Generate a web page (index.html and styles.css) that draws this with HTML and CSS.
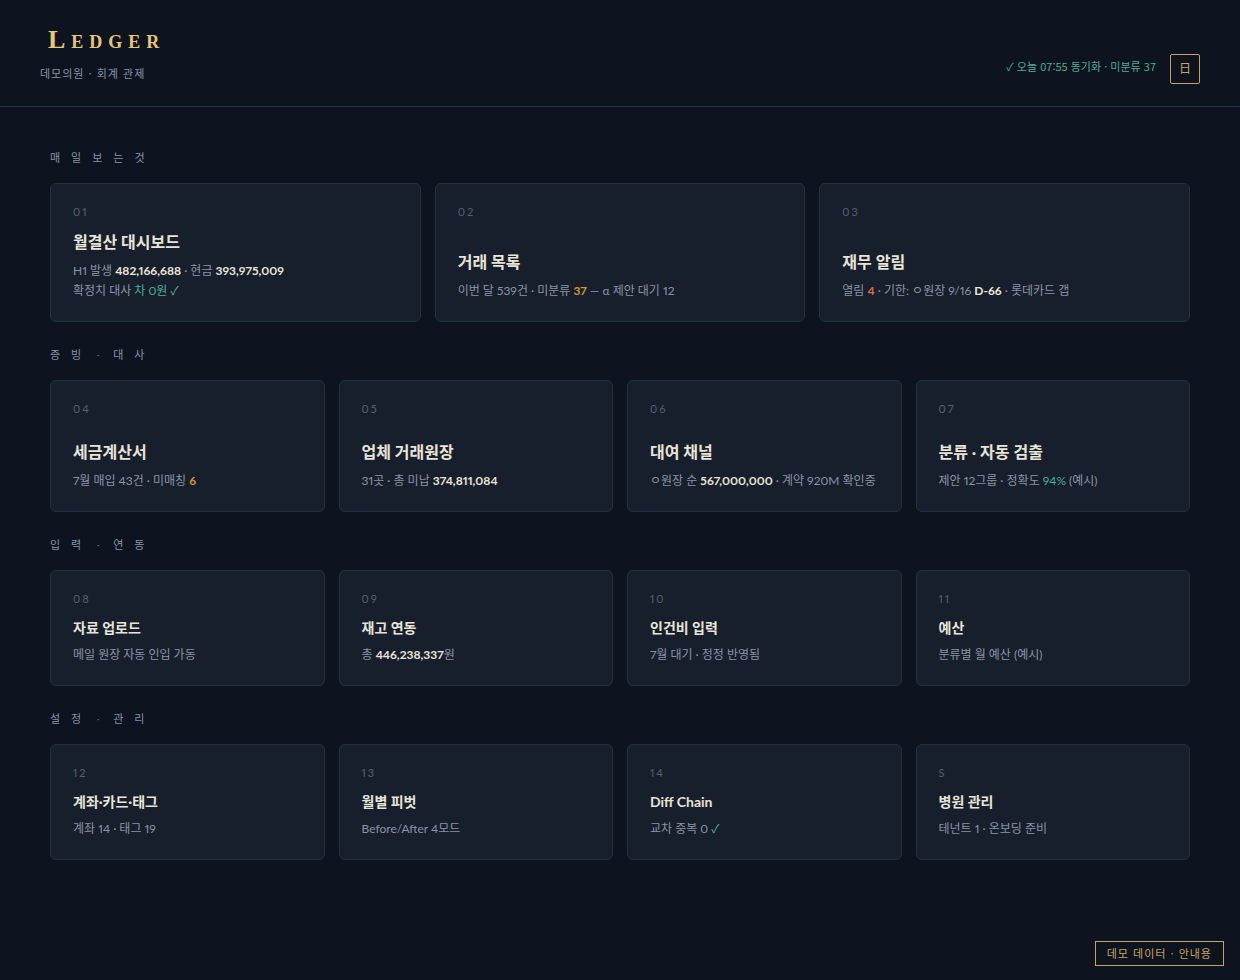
FILE: index.html
```html
<!DOCTYPE html>
<html lang="ko">
<head>
  <meta charset="UTF-8" />
  <meta name="viewport" content="width=device-width, initial-scale=1.0"/>
  <title>Ledger</title>
  <link rel="stylesheet" href="styles.css">
</head>
<body>

  <header class="header">
    <div class="brand">
      <h1 class="logo">Ledger</h1>
      <p class="clinic">데모의원 · 회계 관제</p>
    </div>
    <div class="status">
      <span class="sync">✓ 오늘 07:55 동기화 · 미분류 37</span>
      <button class="theme-btn" type="button">日</button>
    </div>
  </header>

  <main class="main">
    <section class="section">
      <h2 class="section-title">매일보는것</h2>
      <div class="grid three">
        <a class="card" href="#dashboard">
          <span class="num">01</span>
          <h3 class="title">월결산 대시보드</h3>
          <p class="desc">H1 발생 <b>482,166,688</b> · 현금 <b>393,975,009</b><br>확정치 대사 <span class="ok">차 0원 ✓</span></p>
        </a>
        <a class="card" href="#transactions">
          <span class="num">02</span>
          <h3 class="title">거래 목록</h3>
          <p class="desc">이번 달 539건 · 미분류 <b class="warn">37</b> — α 제안 대기 12</p>
        </a>
        <a class="card" href="#alerts">
          <span class="num">03</span>
          <h3 class="title">재무 알림</h3>
          <p class="desc">열림 <b class="bad">4</b> · 기한: ㅇ원장 9/16 <b>D-66</b> · 롯데카드 갭</p>
        </a>
      </div>
    </section>

    <section class="section">
      <h2 class="section-title">증빙<span class="dot">·</span>대사</h2>
      <div class="grid medium">
        <a class="card" href="#tax">
          <span class="num">04</span>
          <h3 class="title">세금계산서</h3>
          <p class="desc">7월 매입 43건 · 미매칭 <b class="warn">6</b></p>
        </a>
        <a class="card" href="#vendors">
          <span class="num">05</span>
          <h3 class="title">업체 거래원장</h3>
          <p class="desc">31곳 · 총 미납 <b>374,811,084</b></p>
        </a>
        <a class="card" href="#loans">
          <span class="num">06</span>
          <h3 class="title">대여 채널</h3>
          <p class="desc">ㅇ원장 순 <b>567,000,000</b> · 계약 920M 확인중</p>
        </a>
        <a class="card" href="#classify">
          <span class="num">07</span>
          <h3 class="title">분류 · 자동 검출</h3>
          <p class="desc">제안 12그룹 · 정확도 <span class="ok">94%</span> (예시)</p>
        </a>
      </div>
    </section>

    <section class="section">
      <h2 class="section-title">입력<span class="dot">·</span>연동</h2>
      <div class="grid small">
        <a class="card" href="#upload">
          <span class="num">08</span>
          <h3 class="title">자료 업로드</h3>
          <p class="desc">메일 원장 자동 인입 가동</p>
        </a>
        <a class="card" href="#stock">
          <span class="num">09</span>
          <h3 class="title">재고 연동</h3>
          <p class="desc">총 <b>446,238,337</b>원</p>
        </a>
        <a class="card" href="#payroll">
          <span class="num">10</span>
          <h3 class="title">인건비 입력</h3>
          <p class="desc">7월 대기 · 정정 반영됨</p>
        </a>
        <a class="card" href="#budget">
          <span class="num">11</span>
          <h3 class="title">예산</h3>
          <p class="desc">분류별 월 예산 (예시)</p>
        </a>
      </div>
    </section>

    <section class="section">
      <h2 class="section-title">설정<span class="dot">·</span>관리</h2>
      <div class="grid small">
        <a class="card" href="#accounts">
          <span class="num">12</span>
          <h3 class="title">계좌·카드·태그</h3>
          <p class="desc">계좌 14 · 태그 19</p>
        </a>
        <a class="card" href="#pivot">
          <span class="num">13</span>
          <h3 class="title">월별 피벗</h3>
          <p class="desc">Before/After 4모드</p>
        </a>
        <a class="card" href="#diff">
          <span class="num">14</span>
          <h3 class="title">Diff Chain</h3>
          <p class="desc">교차 중복 0 <span class="ok">✓</span></p>
        </a>
        <a class="card" href="#clinic">
          <span class="num">S</span>
          <h3 class="title">병원 관리</h3>
          <p class="desc">테넌트 1 · 온보딩 준비</p>
        </a>
      </div>
    </section>
  </main>

  <div class="demo-badge">데모 데이터 · 안내용</div>

</body>
</html>
```
FILE: styles.css
```css
* {
  box-sizing: border-box;
  margin: 0;
  padding: 0;
}

body {
  min-height: 100vh;
  background: #0d141f;
  color: #e8e4d8;
  font-family: Lato, "Noto Sans CJK KR", sans-serif;
  font-size: 12px;
  font-variant-numeric: proportional-nums;
}

.header {
  display: flex;
  align-items: center;
  justify-content: space-between;
  padding: 21px 40px 22px;
  border-bottom: 1px solid #22304a;
}

.logo {
  padding-left: 8px;
  font-family: "Liberation Serif", serif;
  font-size: 26px;
  font-weight: 700;
  font-variant: small-caps;
  letter-spacing: 6px;
  line-height: 32px;
  color: #e6c77a;
}

.clinic {
  margin-top: 8px;
  font-family: "Noto Sans CJK KR", sans-serif;
  font-size: 11px;
  line-height: 18px;
  letter-spacing: 1px;
  color: #8a93a8;
}

.status {
  display: flex;
  gap: 14px;
  padding-top: 33px;
}

.sync {
  font-family: "Noto Sans CJK KR", sans-serif;
  font-size: 11px;
  line-height: 24px;
  color: #4fae95;
}

.theme-btn {
  width: 30px;
  height: 30px;
  background: transparent;
  border: 1px solid #c9a45c;
  border-radius: 2px;
  color: #c9a45c;
  font-family: "Liberation Serif", "Noto Sans CJK KR", serif;
  font-size: 12px;
  line-height: 26px;
  cursor: pointer;
}

.main {
  padding: 43px 50px 80px;
}

.section {
  margin-bottom: 25px;
}

.section-title {
  margin-bottom: 17px;
  font-family: "Liberation Serif", "Noto Sans CJK KR", serif;
  font-size: 11px;
  font-weight: 400;
  line-height: 16px;
  letter-spacing: 11px;
  color: #8a93a8;
}

.dot {
  display: inline-block;
  width: 21px;
  padding-left: 4px;
}

.grid {
  display: grid;
  grid-template-columns: repeat(4, 1fr);
  gap: 14px;
}

.grid.three {
  grid-template-columns: repeat(3, 1fr);
}

.card {
  display: flex;
  flex-direction: column;
  padding: 22px 22px 20px;
  background: #181f2c;
  border: 1px solid #22304a;
  border-radius: 6px;
  color: inherit;
  text-decoration: none;
}

.card:hover {
  border-color: #c9a45c;
}

.medium .card {
  min-height: 132px;
}

.num {
  margin-bottom: 12px;
  font-size: 11px;
  line-height: 12px;
  letter-spacing: 2px;
  color: #566073;
}

.title {
  margin-top: auto;
  margin-bottom: 7px;
  font-size: 16px;
  font-weight: 700;
  line-height: 24px;
}

.small .title {
  font-size: 14px;
  line-height: 21px;
}

.desc {
  line-height: 20px;
  color: #8a93a8;
}

.desc b {
  font-weight: 700;
  color: #e8e4d8;
}

.desc .ok {
  color: #4fae95;
}

.desc .warn {
  color: #d0962c;
}

.desc .bad {
  color: #dc6b48;
}

.demo-badge {
  position: fixed;
  right: 16px;
  bottom: 14px;
  padding: 0 11px;
  border: 1px solid #c9a45c;
  background: #0d141f;
  font-family: "Noto Sans CJK KR", sans-serif;
  font-size: 11px;
  line-height: 23px;
  letter-spacing: 1px;
  color: #c9a45c;
}
```
